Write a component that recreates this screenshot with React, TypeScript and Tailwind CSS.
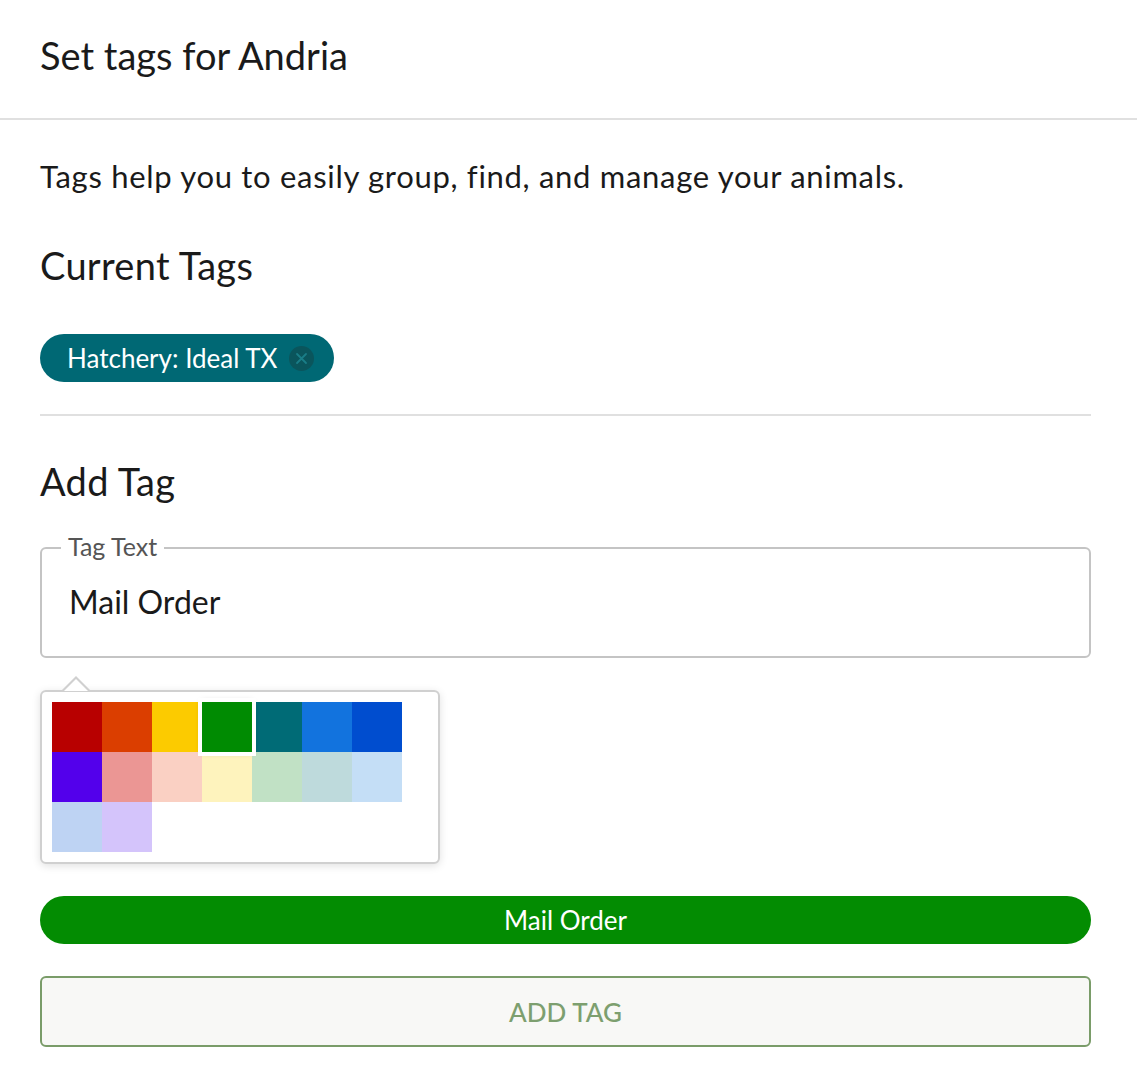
import React from "react";

const colors = [
  "#b80000", "#db3e00", "#fccb00", "#008b02", "#006b76", "#1273de", "#004dcf",
  "#5300eb", "#eb9694", "#fad0c3", "#fef3bd", "#c1e1c5", "#bedadc", "#c4def6",
  "#bed3f3", "#d4c4fb",
];

export default function App() {
  const selected = "#008b02";

  return (
    <div className="min-h-screen bg-white text-[#1a1a1a] font-['Lato','Open_Sans',sans-serif]">
      {/* Header */}
      <div className="h-[120px] flex items-center px-10 pb-2 border-b-2 border-[#e0e0e0]">
        <h1 className="text-[38px] leading-none">Set tags for Andria</h1>
      </div>

      <div className="pl-10 pr-[46px]">
        <p className="text-[31px] leading-none tracking-[0.7px] mt-[41px]">
          Tags help you to easily group, find, and manage your animals.
        </p>

        <h2 className="text-[38px] leading-none tracking-[0.3px] mt-[54px]">Current Tags</h2>

        {/* Current tags */}
        <div className="mt-[50px] flex">
          <span className="h-12 flex items-center gap-3 rounded-full bg-[#006874] pl-[27px] pr-[20px] text-white text-[26px] leading-none">
            Hatchery: Ideal TX
            <span className="w-[25px] h-[25px] rounded-full bg-[#0a555c] flex items-center justify-center">
              <svg width="13" height="13" viewBox="0 0 13 13" fill="none">
                <path d="M2 2l9 9M11 2l-9 9" stroke="#1a7d87" strokeWidth="1.8" strokeLinecap="round" />
              </svg>
            </span>
          </span>
        </div>

        <div className="mt-8 border-t-2 border-[#e0e0e0]" />

        <h2 className="text-[38px] leading-none tracking-[0.3px] mt-[46px]">Add Tag</h2>

        {/* Tag text field */}
        <div className="relative mt-[47px] h-[111px] border-2 border-[#c4c4c4] rounded-md pl-[27px] pt-[37px]">
          <span className="absolute -top-[15px] left-[19px] px-[7px] bg-white text-[25px] leading-none text-[#555]">
            Tag Text
          </span>
          <div className="text-[32px] leading-none">Mail Order</div>
        </div>

        {/* Colour picker */}
        <div className="relative mt-[32px] w-[400px]">
          <div className="absolute -top-[14px] left-[22px] w-0 h-0 border-l-[14px] border-r-[14px] border-b-[14px] border-l-transparent border-r-transparent border-b-[#d0d0d0]" />
          <div className="absolute -top-[11px] left-[24px] w-0 h-0 border-l-[12px] border-r-[12px] border-b-[12px] border-l-transparent border-r-transparent border-b-white z-10" />
          <div className="rounded-md border-2 border-[#d0d0d0] bg-white p-[10px] shadow-[0_2px_8px_rgba(0,0,0,0.12)]">
            <div className="grid grid-cols-[repeat(7,50px)]">
              {colors.map((c) => (
                <div
                  key={c}
                  className={`w-[50px] h-[50px] ${c === selected ? "relative z-10 outline-4 outline-white shadow-[0_0_6px_rgba(0,0,0,0.35)]" : ""}`}
                  style={{ backgroundColor: c }}
                />
              ))}
            </div>
          </div>
        </div>

        {/* Preview */}
        <div className="mt-[32px] h-[48px] rounded-full bg-[#038c02] flex items-center justify-center text-white text-[26px] leading-none">
          Mail Order
        </div>

        <button className="mt-[32px] w-full h-[71px] rounded-md border-2 border-[#7a9c69] bg-[#f8f8f6] text-[#7d9f6f] text-[26px] font-medium leading-none">
          ADD TAG
        </button>
      </div>
    </div>
  );
}
